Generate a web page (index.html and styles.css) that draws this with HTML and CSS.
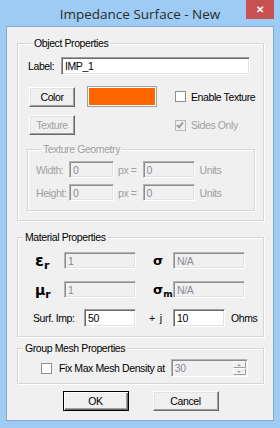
FILE: index.html
```html
<!DOCTYPE html>
<html lang="en">
<head>
  <meta charset="UTF-8" />
  <title>Impedance Surface - New</title>
  <link rel="stylesheet" href="styles.css">
</head>
<body>
  <div class="window">
    <div class="titlebar">
      <div class="title">Impedance Surface - New</div>
      <div class="close">&#x2715;</div>
    </div>

    <div class="client">
      <fieldset class="group">
        <legend>Object Properties</legend>
        <div class="row row-label">
          <span class="lbl">Label:</span>
          <input class="edit w-label" type="text" value="IMP_1" />
        </div>
        <div class="row row-color">
          <button class="btn btn-small">Color</button>
          <div class="swatch"><div class="swatch-fill"></div></div>
          <label class="check-line"><input type="checkbox" class="check" /> Enable Texture</label>
        </div>
        <div class="row row-texture">
          <button class="btn btn-small" disabled>Texture</button>
          <label class="check-line off"><input type="checkbox" class="check" checked disabled /> Sides Only</label>
        </div>

        <fieldset class="group group-geo off">
          <legend>Texture Geometry</legend>
          <div class="row geo-row">
            <span class="geo-lbl">Width:</span>
            <input class="edit w-px" type="text" value="0" disabled />
            <span class="geo-eq">px =</span>
            <input class="edit w-units" type="text" value="0" disabled />
            <span class="geo-unit">Units</span>
          </div>
          <div class="row geo-row">
            <span class="geo-lbl">Height:</span>
            <input class="edit w-px" type="text" value="0" disabled />
            <span class="geo-eq">px =</span>
            <input class="edit w-units" type="text" value="0" disabled />
            <span class="geo-unit">Units</span>
          </div>
        </fieldset>
      </fieldset>

      <fieldset class="group group-mat">
        <legend>Material Properties</legend>
        <div class="row mat-row">
          <span class="sym sym-eps">&#x025B;<sub>r</sub></span>
          <input class="edit w-mat" type="text" value="1" disabled />
          <span class="sym sym-sig">&#x03C3;</span>
          <input class="edit w-mat" type="text" value="N/A" disabled />
        </div>
        <div class="row mat-row mat-row2">
          <span class="sym sym-mu">&#x03BC;<sub>r</sub></span>
          <input class="edit w-mat" type="text" value="1" disabled />
          <span class="sym sym-sig">&#x03C3;<sub>m</sub></span>
          <input class="edit w-mat" type="text" value="N/A" disabled />
        </div>
        <div class="row surf-row">
          <span class="surf-lbl">Surf. Imp:</span>
          <input class="edit w-imp" type="text" value="50" />
          <span class="surf-j">+&nbsp; j</span>
          <input class="edit w-imp" type="text" value="10" />
          <span class="surf-unit">Ohms</span>
        </div>
      </fieldset>

      <fieldset class="group group-mesh">
        <legend>Group Mesh Properties</legend>
        <div class="row mesh-row">
          <label class="check-line mesh-check"><input type="checkbox" class="check" /> Fix Max Mesh Density at</label>
          <div class="spin">
            <input class="spin-edit" type="text" value="30" disabled />
            <div class="spin-btns">
              <span class="spin-up"></span>
              <span class="spin-down"></span>
            </div>
          </div>
        </div>
      </fieldset>

      <div class="actions">
        <button class="btn btn-default">OK</button>
        <button class="btn btn-wide">Cancel</button>
      </div>
    </div>
  </div>
</body>
</html>
```

FILE: styles.css
```css
*, *::before, *::after { box-sizing: border-box; }
body {
  margin: 0;
  background-color: #9dcbf3;
  font-family: "Liberation Sans", Arial, sans-serif;
  font-size: 10.5px;
  letter-spacing: -0.4px;
  color: #000;
}
.window {
  height: 428px;
  display: flex;
  flex-direction: column;
}
.titlebar {
  height: 26px;
  flex-shrink: 0;
  display: grid;
  grid-template-columns: 1fr auto 1fr;
  align-items: start;
}
.title {
  grid-column: 2;
  font-family: "Open Sans", sans-serif;
  font-size: 13.5px;
  letter-spacing: 0;
  line-height: 28px;
  color: #2b2b2b;
  white-space: nowrap;
}
.close {
  grid-column: 3;
  justify-self: end;
  width: 28px;
  height: 19px;
  margin-right: 6px;
  background-color: #c75050;
  color: #fff;
  font-size: 10px;
  font-weight: bold;
  letter-spacing: 0;
  line-height: 19px;
  text-align: center;
}
.client {
  flex: 1;
  margin: 0 6px 7px;
  border: 1px solid #86a9cf;
  background-color: #f0f0f0;
  padding: 10px 9px 0 10px;
}

/* group boxes */
.group {
  margin: 0;
  padding: 7px 13px 9px 9px;
  border: 1px solid #d5d5d5;
  box-shadow: inset 1px 1px 0 #fff, 1px 1px 0 #fff;
  min-width: 0;
}
.group legend {
  padding: 0 2px;
  margin-left: 5px;
  line-height: 13px;
}
.row {
  display: flex;
  align-items: center;
  white-space: nowrap;
}
.row > * { flex-shrink: 0; }

/* inputs */
.edit {
  font: inherit;
  letter-spacing: inherit;
  height: 17px;
  padding: 0 0 0 3px;
  margin: 0;
  border: 1px solid;
  border-color: #a0a0a0 #fff #fff #a0a0a0;
  box-shadow: inset 1px 1px 0 #696969, inset -1px -1px 0 #e3e3e3;
  background-color: #fff;
  color: #000;
  outline: none;
}
.edit:disabled {
  background-color: #f0f0f0;
  color: #8a8a96;
  border-color: #b4b4b4 #fff #fff #b4b4b4;
  box-shadow: inset 1px 1px 0 #8c8c8c, inset -1px -1px 0 #e3e3e3;
}
.btn {
  font: inherit;
  letter-spacing: inherit;
  height: 20px;
  padding: 0;
  margin: 0;
  border: 1px solid;
  border-color: #fff #696969 #696969 #fff;
  box-shadow: inset -1px -1px 0 #a0a0a0, inset 1px 1px 0 #e3e3e3;
  background-color: #f0f0f0;
  color: #000;
}
.btn:disabled {
  color: #a0a0a0;
}
.btn-small { width: 46px; }
.btn-wide { width: 66px; }
.btn-default {
  width: 66px;
  border: 1px solid #000;
  box-shadow: inset 1px 1px 0 #fff, inset -1px -1px 0 #696969, inset -2px -2px 0 #a0a0a0;
}

/* checkboxes */
.check-line {
  display: flex;
  align-items: center;
  gap: 5px;
  white-space: nowrap;
}
.check {
  appearance: none;
  flex-shrink: 0;
  width: 11px;
  height: 11px;
  margin: 0;
  border: 1px solid #8e8f8f;
  background-color: #fff;
  position: relative;
}
.check:checked::after {
  content: "";
  position: absolute;
  left: 2px;
  top: 0;
  width: 4px;
  height: 7px;
  border: solid #a0a0a0;
  border-width: 0 2px 2px 0;
  transform: rotate(40deg);
}
.check:disabled {
  background-color: #f0f0f0;
  border-color: #b8b8b8;
}
.off, .off legend { color: #a0a0a0; }

/* object properties */
.row-label { margin-left: 1px; }
.lbl { width: 33px; }
.w-label { width: 189px; height: 18px; }
.row-color {
  margin-top: 11px;
  height: 21px;
  padding-left: 2px;
}
.swatch {
  width: 70px;
  height: 21px;
  margin-left: 12px;
  border: 1px solid #a0a0a0;
  padding: 1px;
  background-color: #fff;
}
.swatch-fill {
  height: 100%;
  background-color: #ff6600;
}
.row-color .check-line { margin-left: 18px; }
.row-texture {
  margin-top: 8px;
  padding-left: 2px;
}
.row-texture .check-line { margin-left: 100px; }

/* texture geometry */
.group-geo {
  margin-top: 8px;
  padding: 5px 8px 9px 8px;
  margin-right: -5px;
}
.geo-row + .geo-row { margin-top: 6px; }
.geo-lbl { width: 33px; }
.w-px { width: 45px; }
.w-units { width: 52px; }
.geo-eq { margin: 0 6px 0 4px; }
.geo-unit { margin-left: 5px; }

/* material properties */
.group-mat {
  margin-top: 10px;
  padding: 8px 13px 9px 0;
}
.sym {
  font-family: "DejaVu Sans", sans-serif;
  font-weight: bold;
  letter-spacing: 0;
  line-height: 16px;
}
.sym sub {
  font-size: 11px;
  line-height: 0;
  vertical-align: -3px;
}
.sym-eps, .sym-mu {
  width: 46px;
  padding-left: 17px;
  font-size: 16px;
}
.sym-mu { font-size: 14px; }
.sym-sig {
  width: 37px;
  padding-left: 17px;
  font-size: 13px;
}
.sym-sig sub { font-size: 9px; }
.w-mat { width: 72px; }
.mat-row2 { margin-top: 12px; }
.surf-row {
  margin-top: 11px;
  padding-left: 15px;
}
.surf-lbl { width: 51px; }
.w-imp { width: 52px; height: 18px; }
.surf-j {
  width: 37px;
  padding-left: 13px;
}
.surf-unit { margin-left: 6px; }

/* mesh */
.group-mesh {
  margin-top: 5px;
  padding: 4px 13px 6px 0;
}
.mesh-check {
  margin-left: 23px;
  gap: 7px;
}
.spin {
  display: flex;
  margin-left: 6px;
  width: 77px;
  height: 18px;
  border: 1px solid;
  border-color: #b4b4b4 #fff #fff #b4b4b4;
  box-shadow: inset 1px 1px 0 #8c8c8c;
  background-color: #f0f0f0;
}
.spin-edit {
  font: inherit;
  letter-spacing: inherit;
  flex: 1;
  min-width: 0;
  border: 0;
  padding: 0 0 0 3px;
  background: transparent;
  color: #8a8a96;
}
.spin-btns {
  width: 13px;
  display: flex;
  flex-direction: column;
  margin: 1px 1px 1px 0;
}
.spin-btns span {
  flex: 1;
  border: 1px solid;
  border-color: #fff #a0a0a0 #a0a0a0 #fff;
  display: flex;
  align-items: center;
  justify-content: center;
}
.spin-up::after, .spin-down::after {
  content: "";
  border: 2px solid transparent;
}
.spin-up::after { border-bottom-color: #a0a0a0; margin-top: -2px; }
.spin-down::after { border-top-color: #a0a0a0; margin-bottom: -2px; }

/* buttons */
.actions {
  display: flex;
  justify-content: center;
  gap: 24px;
  margin-top: 7px;
}
```
